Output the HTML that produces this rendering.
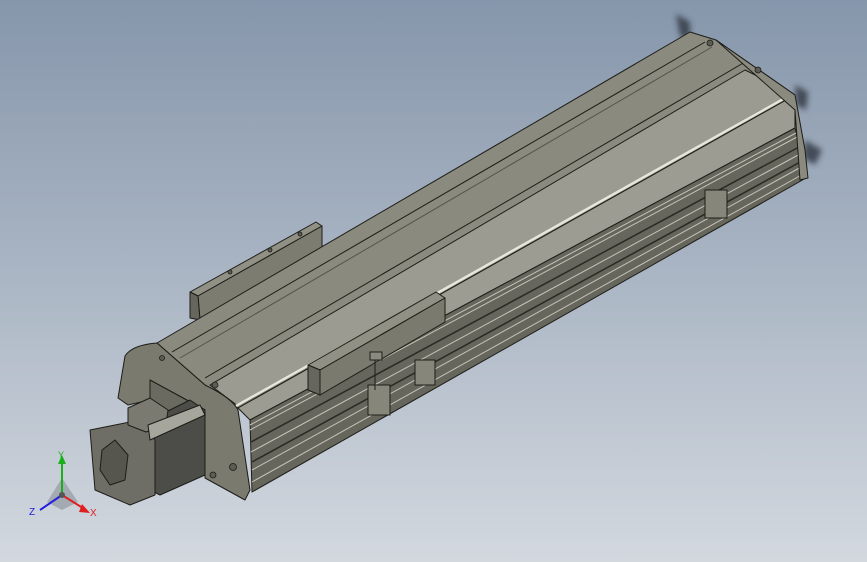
<!DOCTYPE html>
<html><head><style>
html,body{margin:0;padding:0;width:867px;height:562px;overflow:hidden}
body{background:linear-gradient(#8696ab 0%,#a7b3c2 45%,#d3d8df 100%)}
svg{position:absolute;left:0;top:0}
text{font-family:"Liberation Sans",sans-serif}
</style></head><body>
<svg width="867" height="562" viewBox="0 0 867 562">
<defs>
<filter id="b"><feGaussianBlur stdDeviation="3"/></filter>
</defs>
<g fill="#2e3440" filter="url(#b)" opacity="0.8">
<polygon points="676,14 690,22 690,40 680,36"/>
<polygon points="795,85 808,92 806,110 796,105"/>
<polygon points="805,140 822,150 815,165 803,158"/>
</g>
<g stroke="#1d1d18" stroke-width="1" stroke-linejoin="round">
<!-- back block -->
<polygon points="190,292 316,222 322,226 198,296" fill="#909084"/>
<polygon points="198,296 322,226 322,250 200,320" fill="#7c7c70"/>
<polygon points="190,292 198,296 200,320 190,318" fill="#66665c"/>
<!-- top face -->
<polygon points="157,343 690,32 716,40 795,95 238,408 205,385" fill="#8a8a7e"/>
<polygon points="210,385 745,70 792,93 238,406" fill="#9b9b91"/>
<line x1="205" y1="378" x2="745" y2="62"/>
<line x1="172" y1="352" x2="705" y2="42"/>
<line x1="180" y1="358" x2="712" y2="47" stroke="#55554c"/>
<polygon points="238,408 795,95 795,128 250,420" fill="#9c9c92"/>
<!-- rails -->
<polygon points="250,420 795,128 806,178 252,492" fill="#66665d"/>
<g stroke="#c4c4b8" stroke-width="1">
<line x1="250" y1="425" x2="796" y2="133"/>
<line x1="250" y1="430" x2="797" y2="137"/>
<line x1="251" y1="452" x2="800" y2="154"/>
<line x1="252" y1="470" x2="803" y2="166"/>
<line x1="252" y1="482" x2="805" y2="173"/>
</g>
<g stroke="#2a2a25" stroke-width="1.5">
<line x1="251" y1="442" x2="799" y2="147"/>
<line x1="252" y1="462" x2="802" y2="161"/>
</g>
<line x1="236" y1="406" x2="792" y2="94" stroke="#e6e6da" stroke-width="2.5"/>
<!-- end cap near -->
<path d="M118,398 L125,356 Q132,345 157,343 L205,385 Q232,398 238,410 L250,490 L245,500 L205,478 L205,410 L150,380 L150,400 L128,405 Z" fill="#7a7a6e"/>
<polygon points="150,380 205,410 205,470 150,445" fill="#6a6a60"/>
<path d="M716,40 L795,95 L805,150 L808,178 L800,180 L795,110 Z" fill="#8a8a7e"/>
<!-- carriage block -->
<polygon points="308,365 436,292 445,298 320,370" fill="#909084"/>
<polygon points="320,370 445,298 445,322 320,395" fill="#7a7a6e"/>
<polygon points="308,365 320,370 320,395 308,390" fill="#66665c"/>
<!-- motor -->
<polygon points="150,420 190,400 205,410 205,475 160,495 150,490" fill="#4c4c48"/>
<polygon points="90,430 140,420 155,440 155,495 130,505 95,490" fill="#6e6e66"/>
<polygon points="102,450 115,440 128,455 125,480 110,485 100,470" fill="#56564f"/>
<polygon points="128,408 150,398 168,410 166,425 146,432 128,425" fill="#7a7a70"/>
<polygon points="148,425 200,405 205,415 150,440" fill="#a6a69c"/>
<g fill="#86867a">
<rect x="368" y="385" width="22" height="30"/>
<rect x="415" y="360" width="20" height="25"/>
<rect x="705" y="190" width="22" height="28"/>
</g>
<line x1="375" y1="352" x2="375" y2="390"/>
<rect x="370" y="352" width="12" height="8" fill="#8a8a7e"/>
</g>
<g fill="#5c5c52" stroke="#1d1d18" stroke-width="0.8">
<circle cx="710" cy="43" r="3"/><circle cx="758" cy="70" r="3"/>
<circle cx="215" cy="385" r="3"/><circle cx="162" cy="358" r="2.5"/>
<circle cx="233" cy="467" r="3.5"/><circle cx="213" cy="475" r="3"/>
<circle cx="230" cy="272" r="2"/><circle cx="270" cy="250" r="2"/><circle cx="300" cy="234" r="2"/>
</g>
<g>
<polygon points="47,502 62,478 78,502 62,510" fill="#9aa0a8" opacity="0.8"/>
<line x1="62" y1="495" x2="62" y2="462" stroke="#18b018" stroke-width="2"/>
<polygon points="58,464 66,464 62,455" fill="#18b018"/>
<line x1="62" y1="495" x2="86" y2="510" stroke="#e02020" stroke-width="2"/>
<polygon points="82,504 90,513 79,512" fill="#e02020"/>
<line x1="62" y1="495" x2="40" y2="510" stroke="#2020e0" stroke-width="2"/>
<circle cx="62" cy="495" r="3" fill="#555"/>
<text x="58" y="458" font-size="9" fill="#18b018">Y</text>
<text x="90" y="516" font-size="10" fill="#e02020">X</text>
<text x="29" y="515" font-size="10" fill="#2020e0">Z</text>
</g>
</svg>
</body></html>
